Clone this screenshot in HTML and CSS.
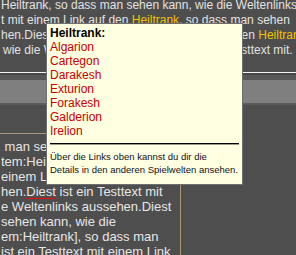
FILE: index.html
```html
<!DOCTYPE html>
<html lang="de">
<head>
<meta charset="utf-8">
<title>Heiltrank</title>
<link rel="stylesheet" href="styles.css">
</head>
<body>
<div class="page">
  <div class="prose">
    <div class="line">Heiltrank, so dass man sehen kann, wie die Weltenlinks</div>
    <div class="line">t mit einem Link auf den <a class="link hover">Heiltrank</a>, so dass man sehen</div>
    <div class="line">hen.Diest ist ein Testtext mit einem Link auf den <a class="link">Heiltrank</a></div>
    <div class="line indent">wie die Weltenlinks aussehen.Diest ist ein Testtext mit.</div>
  </div>
  <div class="toolbar">
    <div class="tb-white"></div>
    <div class="tb-dark"></div>
    <div class="tb-mid"></div>
    <div class="tb-band"></div>
    <div class="tb-foot"></div>
  </div>
  <div class="editor">
    <div class="eline"> man sehen kann, wie die Weltenlinks</div>
    <div class="eline"><span class="sp">tem</span>:Heiltrank], so dass man sehen</div>
    <div class="eline">einem Link auf den [Item:Heiltrank]</div>
    <div class="eline">hen.<span class="sp">Diest</span> ist ein Testtext mit</div>
    <div class="eline">e <span class="sp">Weltenlinks</span> aussehen.<span class="sp">Diest</span></div>
    <div class="eline">sehen kann, wie die</div>
    <div class="eline"><span class="sp">em</span>:Heiltrank], so dass man</div>
    <div class="eline">ist ein Testtext mit einem Link</div>
  </div>
  <div class="tooltip">
    <div class="tt-title">Heiltrank:</div>
    <ul class="tt-list">
      <li><a class="tt-link">Algarion</a></li>
      <li><a class="tt-link">Cartegon</a></li>
      <li><a class="tt-link">Darakesh</a></li>
      <li><a class="tt-link">Exturion</a></li>
      <li><a class="tt-link">Forakesh</a></li>
      <li><a class="tt-link">Galderion</a></li>
      <li><a class="tt-link">Irelion</a></li>
    </ul>
    <div class="tt-rule"></div>
    <p class="tt-note">Über die Links oben kannst du dir die<br>Details in den anderen Spielwelten ansehen.</p>
  </div>
</div>
</body>
</html>
```
FILE: styles.css
```css
html, body {
  margin: 0;
  padding: 0;
  background: #4e4e4e;
  overflow: hidden;
}
.page {
  position: relative;
  width: 296px;
  height: 255px;
  overflow: hidden;
  font-family: "Liberation Sans", Arial, sans-serif;
}
.prose {
  margin-top: -2px;
  color: #e2e2e2;
  font-size: 12px;
  line-height: 15px;
}
.line {
  white-space: nowrap;
  padding-left: 1px;
}
.indent {
  padding-left: 3px;
}
.link {
  color: #f2c200;
  text-decoration: none;
}
.link.hover {
  text-decoration: underline;
}
.toolbar {
  margin-top: 14px;
}
.tb-white { height: 1px; background: #f4f4f4; }
.tb-dark { height: 2px; background: #484848; }
.tb-mid { height: 5px; background: #575757; }
.tb-band { height: 23px; background: #7f7f7f; }
.tb-foot { height: 2px; background: #5c5c5c; }
.editor {
  margin-top: 28px;
  margin-left: -20px;
  width: 201px;
  box-sizing: border-box;
  border: 1px solid #a89878;
  padding: 5px 0 0 20px;
  height: 140px;
  color: #e6e6e6;
  font-size: 13px;
  line-height: 15px;
}
.eline {
  white-space: pre;
  overflow: hidden;
}
.sp {
  text-decoration: underline dotted #e01010;
  text-underline-offset: 2px;
}
.tooltip {
  position: absolute;
  left: 46px;
  top: 23px;
  width: 197px;
  height: 162px;
  box-sizing: border-box;
  background: #ffffe1;
  border: 1px solid #6e6e6e;
  padding: 2px 3px 0 3px;
  color: #000;
  font-size: 12px;
  line-height: 14px;
}
.tt-title {
  font-weight: bold;
}
.tt-list {
  list-style: none;
  margin: 0;
  padding: 0;
}
.tt-link {
  color: #c40000;
  text-decoration: none;
}
.tt-rule {
  margin-top: 5px;
  height: 1px;
  background: #000;
  border-bottom: 1px solid #9a9a90;
}
.tt-note {
  margin: 5px 0 0 0;
  font-size: 9.5px;
  line-height: 13px;
  white-space: nowrap;
  color: #111122;
}
```
